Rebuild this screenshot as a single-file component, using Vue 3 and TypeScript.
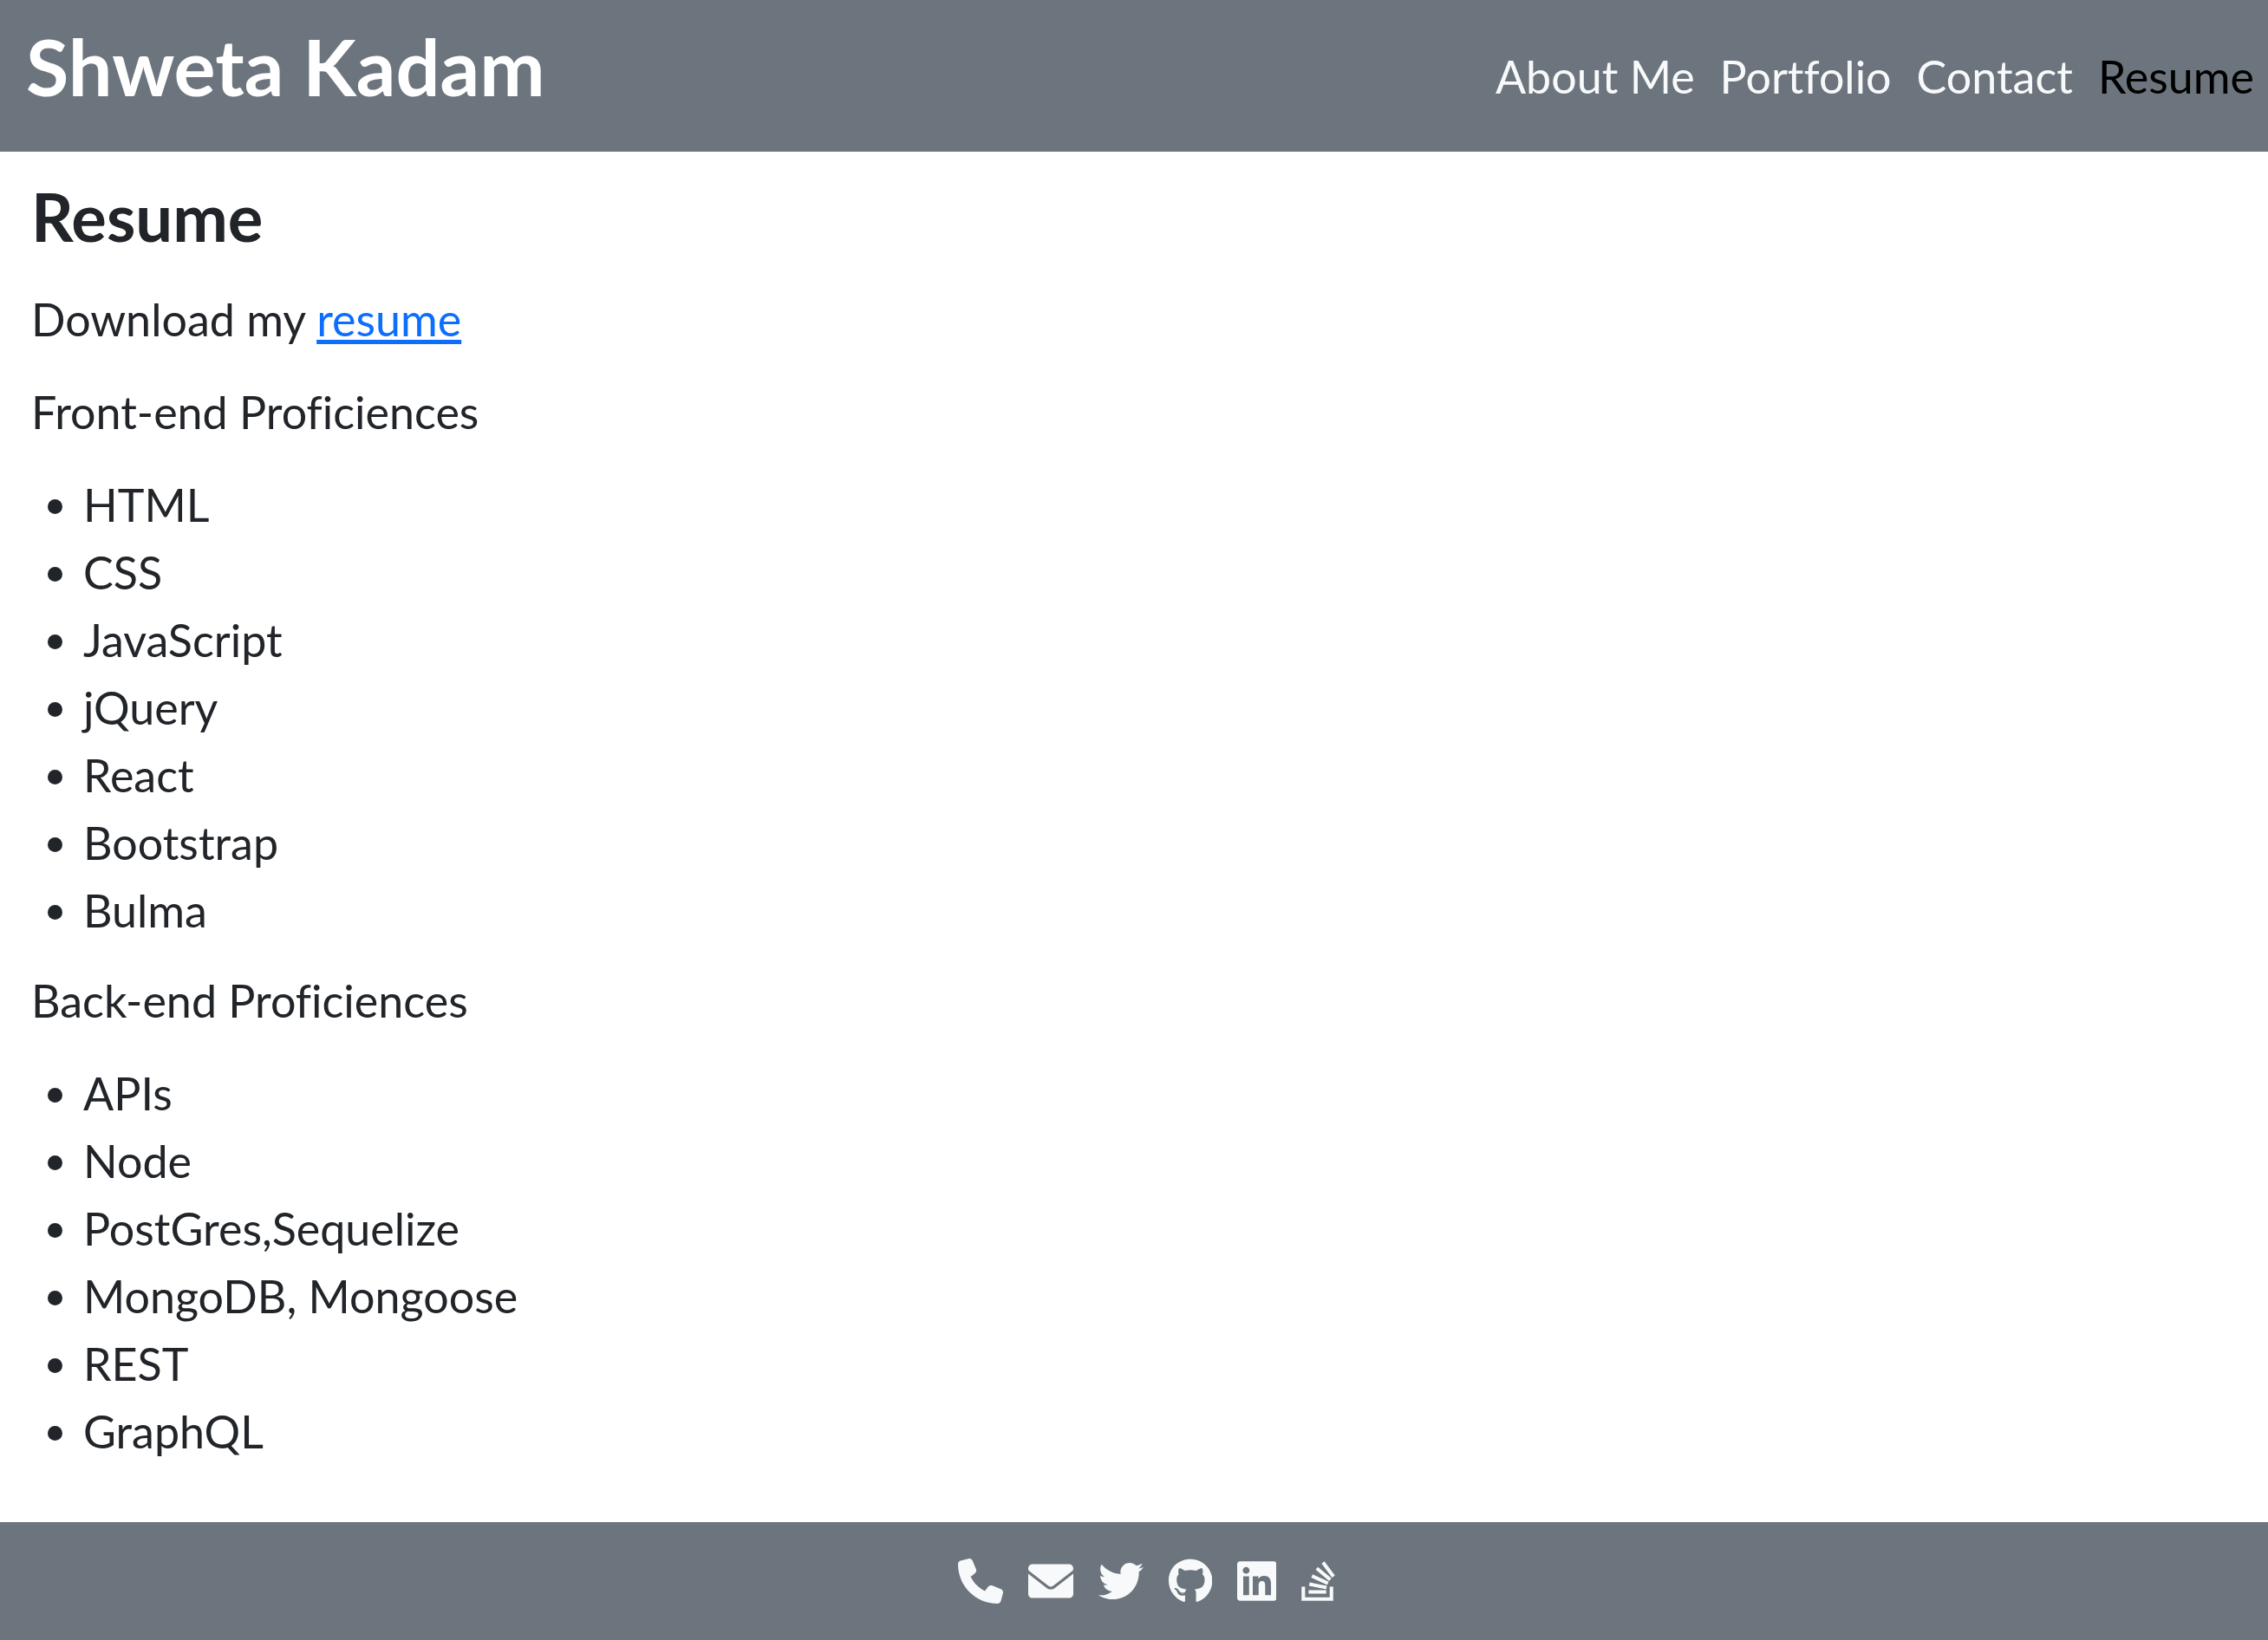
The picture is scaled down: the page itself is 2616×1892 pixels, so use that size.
<script setup lang="ts">
interface NavItem {
  label: string
  active?: boolean
}

interface SkillGroup {
  title: string
  skills: string[]
}

interface ContactLink {
  name: string
  width: number
  path: string
}

const navItems: NavItem[] = [
  { label: 'About Me' },
  { label: 'Portfolio' },
  { label: 'Contact' },
  { label: 'Resume', active: true },
]

const groups: SkillGroup[] = [
  {
    title: 'Front-end Proficiences',
    skills: ['HTML', 'CSS', 'JavaScript', 'jQuery', 'React', 'Bootstrap', 'Bulma'],
  },
  {
    title: 'Back-end Proficiences',
    skills: ['APIs', 'Node', 'PostGres,Sequelize', 'MongoDB, Mongoose', 'REST', 'GraphQL'],
  },
]

const contacts: ContactLink[] = [
  {
    name: 'Phone',
    width: 512,
    path: 'M164.9 24.6c-7.7-18.6-28-28.5-47.4-23.2l-88 24C12.1 30.2 0 46 0 64C0 311.4 200.6 512 448 512c18 0 33.8-12.1 38.6-29.5l24-88c5.3-19.4-4.6-39.7-23.2-47.4l-96-40c-16.3-6.8-35.2-2.1-46.3 11.6L304.7 368C234.3 334.7 177.3 277.7 144 207.3L193.3 167c13.7-11.2 18.4-30 11.6-46.3l-40-96z',
  },
  {
    name: 'Email',
    width: 512,
    path: 'M256 352c-16.53 0-33.06-5.422-47.16-16.41L0 173.2V400C0 426.5 21.49 448 48 448h416c26.51 0 48-21.49 48-48V173.2l-208.8 162.5C289.1 346.6 272.5 352 256 352zM16.29 145.3l212.2 165.1c16.19 12.6 38.87 12.6 55.06 0l212.2-165.1C505.1 137.3 512 125 512 112C512 85.49 490.5 64 464 64h-416C21.49 64 0 85.49 0 112C0 125 6.01 137.3 16.29 145.3z',
  },
  {
    name: 'Twitter',
    width: 512,
    path: 'M459.37 151.716c.325 4.548.325 9.097.325 13.645 0 138.72-105.583 298.558-298.558 298.558-59.452 0-114.68-17.219-161.137-47.106 8.447.974 16.568 1.299 25.34 1.299 49.055 0 94.213-16.568 130.274-44.832-46.132-.975-84.792-31.188-98.112-72.772 6.498.974 12.995 1.624 19.818 1.624 9.421 0 18.843-1.3 27.614-3.573-48.081-9.747-84.143-51.98-84.143-102.985v-1.299c13.969 7.797 30.214 12.67 47.431 13.319-28.264-18.843-46.781-51.005-46.781-87.391 0-19.492 5.197-37.36 14.294-52.954 51.655 63.675 129.3 105.258 216.365 109.807-1.624-7.797-2.599-15.918-2.599-24.04 0-57.828 46.782-104.934 104.934-104.934 30.213 0 57.502 12.67 76.67 33.137 23.715-4.548 46.456-13.32 66.599-25.34-7.798 24.366-24.366 44.833-46.132 57.827 21.117-2.273 41.584-8.122 60.426-16.243-14.292 20.791-32.161 39.308-52.628 54.253z',
  },
  {
    name: 'GitHub',
    width: 496,
    path: 'M165.9 397.4c0 2-2.3 3.6-5.2 3.6-3.3.3-5.6-1.3-5.6-3.6 0-2 2.3-3.6 5.2-3.6 3-.3 5.6 1.3 5.6 3.6zM244.8 8C106.1 8 0 113.3 0 252c0 110.9 69.8 205.8 169.5 239.2 12.8 2.3 17.3-5.6 17.3-12.1 0-6.2-.3-40.4-.3-61.4 0 0-70 15-84.7-29.8 0 0-11.4-29.1-27.8-36.6 0 0-22.9-15.7 1.6-15.4 0 0 24.9 2 38.6 25.8 21.9 38.6 58.6 27.5 72.9 20.9 2.3-16 8.8-27.1 16-33.7-55.9-6.2-112.3-14.3-112.3-110.5 0-27.5 7.6-41.3 23.6-58.9-2.6-6.5-11.1-33.3 2.6-67.9 20.9-6.5 69 27 69 27 20-5.6 41.5-8.5 62.8-8.5s42.8 2.9 62.8 8.5c0 0 48.1-33.6 69-27 13.7 34.7 5.2 61.4 2.6 67.9 16 17.7 25.8 31.5 25.8 58.9 0 96.5-58.9 104.2-114.8 110.5 9.2 7.9 17 22.9 17 46.4 0 33.7-.3 75.4-.3 83.6 0 6.5 4.6 14.4 17.3 12.1C428.2 457.8 496 362.9 496 252 496 113.3 383.5 8 244.8 8z',
  },
  {
    name: 'LinkedIn',
    width: 448,
    path: 'M416 32H31.9C14.3 32 0 46.5 0 64.3v383.4C0 465.5 14.3 480 31.9 480H416c17.6 0 32-14.5 32-32.3V64.3c0-17.8-14.4-32.3-32-32.3zM135.4 416H69V202.2h66.5V416zm-33.2-243c-21.3 0-38.5-17.3-38.5-38.5S80.9 96 102.2 96c21.2 0 38.5 17.3 38.5 38.5 0 21.3-17.2 38.5-38.5 38.5zm282.1 243h-66.4V312c0-24.8-.5-56.7-34.5-56.7-34.6 0-39.9 27-39.9 54.9V416h-66.4V202.2h63.7v29.2h.9c8.9-16.8 30.6-34.5 62.9-34.5 67.2 0 79.7 44.3 79.7 101.9V416z',
  },
  {
    name: 'Stack Overflow',
    width: 384,
    path: 'M290.7 311L95 269.7 86.8 309l195.7 41zm51-87L188.2 95.7l-25.5 30.8 153.5 128.3zm-31.2 39.7L129.2 179l-16.7 36.5L293.7 300zM262 32l-32 24 119.3 160.3 32-24zm20.5 328h-200v39.7h200zm39.7 80H42.7V320h-40v160h359.5V320h-40z',
  },
]
</script>

<template>
  <div class="page">
    <header class="header">
      <h1 class="brand">Shweta Kadam</h1>
      <nav class="nav" aria-label="Main">
        <a
          v-for="item in navItems"
          :key="item.label"
          href="#"
          class="nav-link"
          :class="{ active: item.active }"
          :aria-current="item.active ? 'page' : undefined"
        >{{ item.label }}</a>
      </nav>
    </header>

    <main class="content">
      <h2 class="heading">Resume</h2>
      <p class="line">Download my <a class="download" href="#">resume</a></p>
      <section v-for="group in groups" :key="group.title">
        <p class="line">{{ group.title }}</p>
        <ul class="skills">
          <li v-for="skill in group.skills" :key="skill">{{ skill }}</li>
        </ul>
      </section>
    </main>

    <footer class="footer">
      <a v-for="c in contacts" :key="c.name" href="#" class="contact" :aria-label="c.name">
        <svg class="icon" :viewBox="`0 0 ${c.width} 512`" aria-hidden="true">
          <path :d="c.path" />
        </svg>
      </a>
    </footer>
  </div>
</template>

<style>
body {
  margin: 0;
  background: #fff;
}
</style>

<style scoped>
.page {
  display: flex;
  flex-direction: column;
  min-height: 100vh;
  color: #212529;
  font-family: Lato, "Noto Sans", sans-serif;
  font-size: 52px;
  line-height: 78px;
  font-variant-ligatures: none;
}

.header {
  display: flex;
  align-items: center;
  justify-content: space-between;
  padding: 22px 16px 21px 30px;
  background: #6c757d;
}

.brand {
  margin: 0 0 24px;
  color: #fff;
  font-size: 90px;
  font-weight: 700;
  line-height: 108px;
}

.nav {
  display: flex;
  gap: 29px;
}

.nav-link {
  color: #f8f9fa;
  text-decoration: none;
}

.nav-link.active {
  color: #000;
}

.content {
  flex: 1;
  padding: 29px 36px 36px;
}

.heading {
  margin: 0 0 33px;
  font-size: 76px;
  font-weight: 700;
  line-height: 92px;
}

.line {
  margin: 0 0 29px;
}

.download {
  color: #0d6efd;
  text-decoration: underline;
  text-decoration-thickness: 5px;
  text-underline-offset: 4px;
  text-decoration-skip-ink: none;
}

.skills {
  margin: 0 0 26px;
  padding-left: 60px;
}

.footer {
  display: flex;
  justify-content: center;
  padding: 42px 0;
  background: #6c757d;
}

.contact {
  margin-left: 29px;
  color: #f8f9fa;
}

.icon {
  display: block;
  height: 52px;
  fill: currentColor;
}
</style>
